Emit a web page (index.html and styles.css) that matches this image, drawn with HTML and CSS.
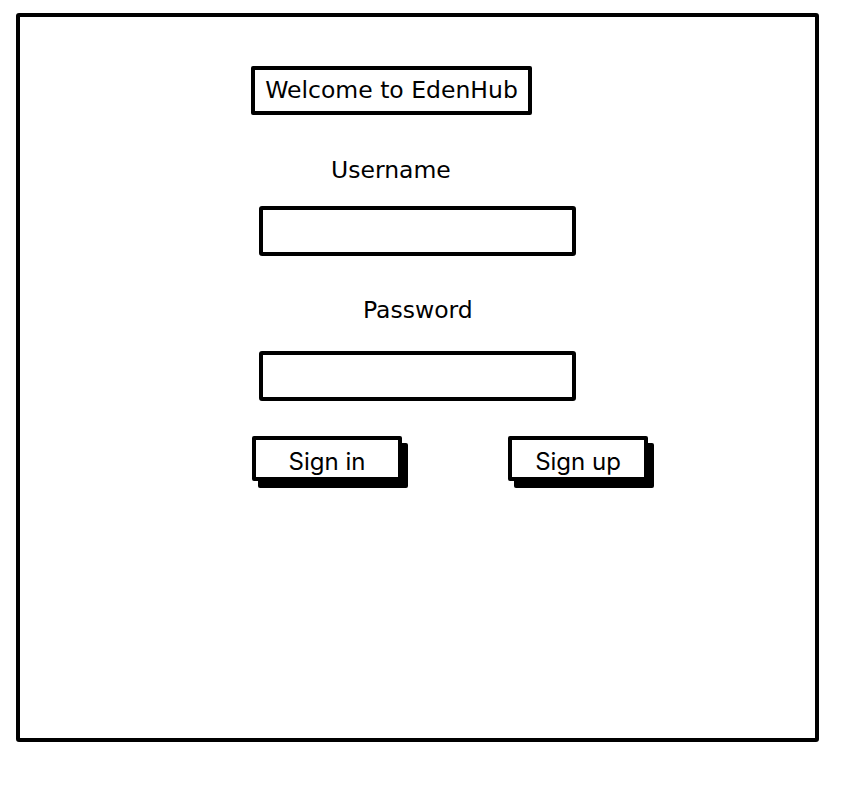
FILE: index.html
```html
<!DOCTYPE html>
<html lang="en">
  <head>
    <title>EdenHub - Sign in</title>
    <link rel="stylesheet" href="styles.css">
  </head>
  <body>
    <div id="frame">
      <div class="title">Welcome to EdenHub</div>
      <form action="#">
        <label class="label user" for="username">Username</label>
        <input type="text" id="username" class="field" />
        <label class="label pass" for="password">Password</label>
        <input type="password" id="password" class="field" />
        <div class="buttons">
          <button type="submit" class="btn signin">Sign in</button>
          <button type="button" class="btn signup">Sign up</button>
        </div>
      </form>
    </div>
  </body>
</html>
```

FILE: styles.css
```css
* {
  margin: 0;
  padding: 0;
  box-sizing: border-box;
}
body {
  background: #fff;
  font-family: "DejaVu Sans", "Noto Sans", sans-serif;
  color: #000;
}
#frame {
  /* outer sketch frame */
  width: 803px;
  height: 729px;
  margin: 13px 0 0 16px;
  border: 4px solid #000;
  border-radius: 3px;
  padding: 49px 0 0 231px;
}
.title {
  /* Welcome to EdenHub */
  width: 281px;
  height: 49px;
  border: 4px solid #000;
  border-radius: 2px;
  font-size: 23.5px;
  line-height: 41px;
  text-align: center;
  white-space: nowrap;
}
form {
  display: flex;
  flex-direction: column;
  align-items: flex-start;
}
.label {
  display: block;
  font-size: 23.5px;
  line-height: 28px;
}
.label.user {
  margin: 41px 0 0 80px;
}
.label.pass {
  margin: 40px 0 0 112px;
}
.field {
  /* text inputs */
  width: 317px;
  height: 50px;
  margin: 22px 0 0 8px;
  border: 4px solid #000;
  border-radius: 3px;
  background: #fff;
  outline: 0 none;
  font-size: 18px;
  padding: 0 10px;
}
#password {
  margin-top: 27px;
}
.buttons {
  display: flex;
  gap: 106px;
  margin: 35px 0 0 1px;
}
.btn {
  height: 45px;
  padding-top: 6px;
  border: 4px solid #000;
  border-radius: 2px;
  background: #fff;
  box-shadow: 6px 7px 0 #000;
  font-family: "Inter", "Liberation Sans", sans-serif;
  font-size: 24px;
  line-height: 29px;
  color: #000;
  cursor: pointer;
}
.signin {
  width: 150px;
}
.signup {
  width: 140px;
}
```
